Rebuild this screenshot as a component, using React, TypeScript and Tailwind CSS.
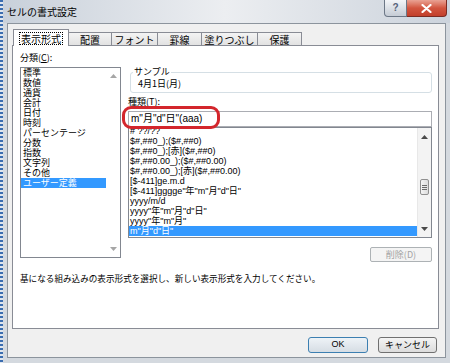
const categories = ['標準', '数値', '通貨', '会計', '日付', '時刻', 'パーセンテージ', '分数', '指数', '文字列', 'その他', 'ユーザー定義'];

const formats = [
  '# ??/??',
  '$#,##0_);($#,##0)',
  '$#,##0_);[赤]($#,##0)',
  '$#,##0.00_);($#,##0.00)',
  '$#,##0.00_);[赤]($#,##0.00)',
  '[$-411]ge.m.d',
  '[$-411]gggge"年"m"月"d"日"',
  'yyyy/m/d',
  'yyyy"年"m"月"d"日"',
  'yyyy"年"m"月"',
  'm"月"d"日"',
];

const tabs = [
  { label: '配置', w: 'w-[44px]' },
  { label: 'フォント', w: 'w-[47px]' },
  { label: '罫線', w: 'w-[45px]' },
  { label: '塗りつぶし', w: 'w-[57px]' },
  { label: '保護', w: 'w-[45px]' },
];

function ArrowUp({ color }: { color: string }) {
  return (
    <svg width="7" height="4" viewBox="0 0 7 4">
      <path d="M0 4 L3.5 0 L7 4 Z" fill={color} />
    </svg>
  );
}

function ArrowDown({ color }: { color: string }) {
  return (
    <svg width="7" height="4" viewBox="0 0 7 4">
      <path d="M0 0 L3.5 4 L7 0 Z" fill={color} />
    </svg>
  );
}

export default function App() {
  return (
    <div className="relative w-[450px] h-[363px] overflow-hidden bg-[#d4d9df] font-['Noto_Sans_CJK_JP',sans-serif] text-black">
      {/* dotted selection edge */}
      <div className="absolute left-0 top-0 h-full w-[3px] bg-[repeating-linear-gradient(180deg,#3b6db0_0px,#3b6db0_2px,#dfe6ee_2px,#dfe6ee_4px)]"></div>

      {/* Title bar */}
      <div className="flex h-[23px] bg-linear-to-r from-[#c8d0da] via-[#eceef1] to-[#ccd3dc]">
        <div className="pl-[7px] pt-[6px] text-[10px] leading-[12px]">セルの書式設定</div>
        <div className="ml-auto mr-[3px] flex h-[17px]">
          <div className="w-[23px] flex items-center justify-center border border-t-0 border-[#6c7786] rounded-bl-[4px] bg-linear-to-b from-[#f3f5f8] to-[#c5ccd5] text-[10px] leading-[10px] font-bold text-[#56627a] font-['Liberation_Sans',sans-serif]">
            ?
          </div>
          <div className="w-[40px] flex items-center justify-center border border-t-0 border-l-0 border-[#7b2b22] rounded-br-[4px] bg-linear-to-b from-[#e9a294] via-[#d2553f] to-[#c23f2b]">
            <svg width="11" height="9" viewBox="0 0 11 9">
              <path d="M1.5 1 L9.5 8 M9.5 1 L1.5 8" stroke="#ffffff" strokeWidth="2.2" strokeLinecap="round" />
            </svg>
          </div>
        </div>
      </div>

      {/* Client area */}
      <div className="ml-[7px] w-[439px] h-[335px] border border-[#8c949d] bg-[#f0f0f0]">
        {/* Tabs */}
        <div className="ml-[5px] mt-[5px] flex items-end h-[16px] text-[10px]">
          <div className="relative z-10 -mb-px h-[17px] w-[56px] flex items-center justify-center border border-b-0 border-[#898c95] bg-white">
            <span className="border border-dotted border-black px-[1px] leading-[11px]">表示形式</span>
          </div>
          {tabs.map((t) => (
            <div
              key={t.label}
              className={`${t.w} -ml-px h-[13px] flex items-center justify-center border border-b-0 border-[#898c95] bg-linear-to-b from-[#f4f4f4] to-[#e2e2e2] leading-[11px]`}
            >
              {t.label}
            </div>
          ))}
        </div>

        {/* Panel */}
        <div className="relative ml-[4px] w-[427px] h-[284px] border border-[#898c95] bg-white pt-[7px] pl-[7px] text-[9px] leading-[10px]">
          <div className="flex items-start">
            {/* Category */}
            <div className="w-[101px]">
              <div className="h-[10px]">
                分類(<span className="underline">C</span>):
              </div>
              <div className="mt-[4px] h-[191px] flex border border-[#828790]">
                <div className="flex-1">
                  {categories.map((c, i) => (
                    <div
                      key={c}
                      className={`h-[10px] pl-[2px] whitespace-nowrap ${i === categories.length - 1 ? 'bg-[#3399ff] text-white' : ''}`}
                    >
                      {c}
                    </div>
                  ))}
                </div>
                <div className="w-[14px] flex flex-col items-center justify-between py-[6px]">
                  <ArrowUp color="#a6a6a6" />
                  <ArrowDown color="#a6a6a6" />
                </div>
              </div>
            </div>

            {/* Right column */}
            <div className="ml-[7px] w-[304px]">
              <div className="relative mt-[19px] ml-[2px] h-[21px] border border-[#d5dfe5] rounded-[3px]">
                <div className="absolute left-[2px] -top-[6px] bg-white px-[1px]">サンプル</div>
                <div className="pl-[7px] pt-[6px]">4月1日(月)</div>
              </div>
              <div className="mt-[4px] h-[10px]">
                種類(<span className="underline">T</span>):
              </div>
              <div className="mt-[4px] h-[16px] border border-[#abadb3] pl-[2px] text-[10px] leading-[14px] font-['Liberation_Sans','Noto_Sans_CJK_JP',sans-serif] whitespace-nowrap">
                m"月"d"日"(aaa)
              </div>
              <div className="h-[111px] flex border border-[#828790] overflow-hidden">
                <div className="flex-1 overflow-hidden">
                  <div className="-mt-[2px] font-['Liberation_Sans','Noto_Sans_CJK_JP',sans-serif]">
                    {formats.map((f, i) => (
                      <div
                        key={f}
                        className={`h-[10px] pl-[1px] whitespace-nowrap ${i === formats.length - 1 ? 'bg-[#3399ff] text-white' : ''}`}
                      >
                        {f}
                      </div>
                    ))}
                  </div>
                </div>
                <div className="w-[14px] flex flex-col border-l border-[#e8e8e8] bg-[#f3f3f3]">
                  <div className="h-[17px] flex items-center justify-center">
                    <ArrowUp color="#4a4a4a" />
                  </div>
                  <div className="flex-1">
                    <div className="mt-[34px] mx-[2px] h-[16px] border border-[#8f8f8f] rounded-[2px] bg-linear-to-r from-[#f4f4f4] to-[#dcdcdc] flex flex-col items-center justify-center gap-[1px]">
                      <div className="w-[5px] h-px bg-[#6a6a6a]"></div>
                      <div className="w-[5px] h-px bg-[#6a6a6a]"></div>
                      <div className="w-[5px] h-px bg-[#6a6a6a]"></div>
                    </div>
                  </div>
                  <div className="h-[17px] flex items-center justify-center">
                    <ArrowDown color="#4a4a4a" />
                  </div>
                </div>
              </div>
              <div className="mt-[9px] ml-auto w-[62px] h-[15px] flex items-center justify-center border border-[#adb2b5] rounded-[2px] bg-[#f4f4f4] text-[#a3a3a3]">
                削除(D)
              </div>
            </div>
          </div>

          <div className="mt-[11px] text-[8.6px] whitespace-nowrap">
            基になる組み込みの表示形式を選択し、新しい表示形式を入力してください。
          </div>

          {/* red marker around the input */}
          <div className="absolute left-[109px] top-[60px] w-[98px] h-[23px] border-[3px] border-[#d3262c] rounded-[9px]"></div>
        </div>

        {/* Buttons */}
        <div className="mt-[8px] flex justify-end gap-[10px] pr-[8px] text-[9px]">
          <div className="w-[60px] h-[16px] flex items-center justify-center border border-[#3c7fb1] rounded-[3px] bg-linear-to-b from-[#eef3f7] to-[#d6dde4] font-['Liberation_Sans',sans-serif]">
            OK
          </div>
          <div className="w-[59px] h-[16px] flex items-center justify-center border border-[#707070] rounded-[3px] bg-linear-to-b from-[#f4f4f4] to-[#dcdcdc]">
            キャンセル
          </div>
        </div>
      </div>
    </div>
  );
}
